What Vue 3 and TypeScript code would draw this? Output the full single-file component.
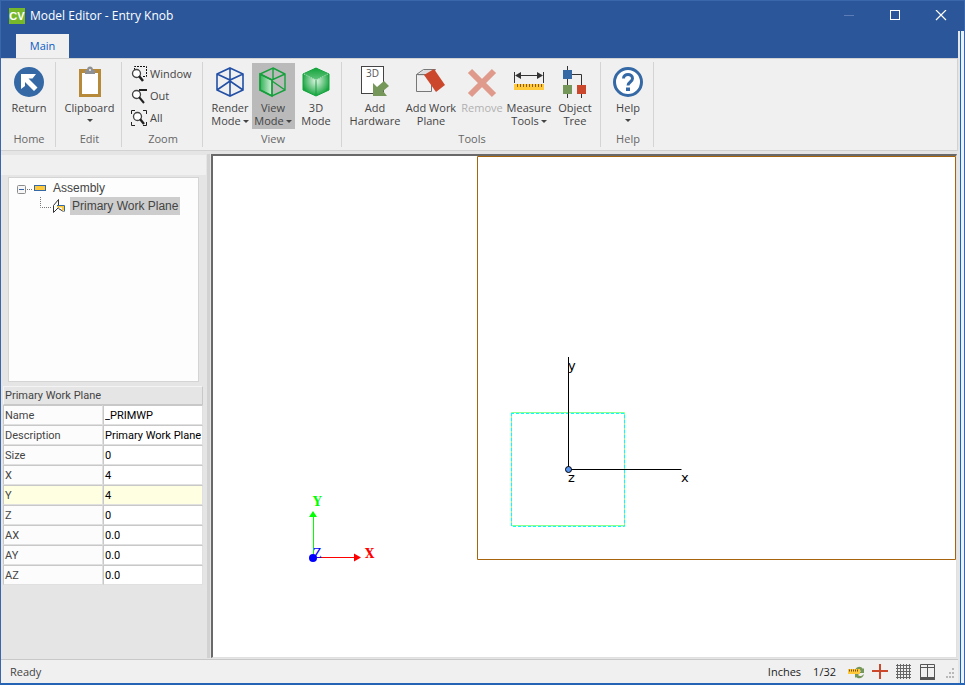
<script setup lang="ts">
import { reactive, ref } from 'vue'

interface Field {
  label: string
  value: string
}

const fields = reactive<Field[]>([
  { label: 'Name', value: '_PRIMWP' },
  { label: 'Description', value: 'Primary Work Plane' },
  { label: 'Size', value: '0' },
  { label: 'X', value: '4' },
  { label: 'Y', value: '4' },
  { label: 'Z', value: '0' },
  { label: 'AX', value: '0.0' },
  { label: 'AY', value: '0.0' },
  { label: 'AZ', value: '0.0' },
])
const activeField = ref('Y')
</script>

<template>
  <div class="window">
    <header class="titlebar">
      <span class="logo">CV</span>
      <h1 class="title">Model Editor - Entry Knob</h1>
      <div class="caption-buttons">
        <button class="caption-button" aria-label="Minimize" disabled>
          <svg width="12" height="12"><path d="M1 5.500h10" stroke="#5c7db5" fill="none" /></svg>
        </button>
        <button class="caption-button" aria-label="Maximize">
          <svg width="12" height="12"><rect x="1.500" y="0.500" width="9" height="9" stroke="#fff" fill="none" /></svg>
        </button>
        <button class="caption-button" aria-label="Close">
          <svg width="12" height="12"><path d="M1 0l10 10M11 0L1 10" stroke="#fff" stroke-width="1.200" fill="none" /></svg>
        </button>
      </div>
    </header>

    <div class="frame">
      <div class="client">
        <nav class="tabs"><button class="tab">Main</button></nav>

        <div class="ribbon">
          <section class="group home">
            <div class="tools">
              <button class="tool">
                <svg class="icon" viewBox="0 0 32 32">
                  <circle cx="16" cy="16" r="15" fill="#3469a6" />
                  <path d="M8 8h15l-3.500 4.500h-4l9 9-3.500 3.500-9-9v4L8 23z" fill="#fff" />
                </svg>
                <span>Return</span>
              </button>
            </div>
            <h2>Home</h2>
          </section>

          <section class="group edit">
            <div class="tools">
              <button class="tool">
                <svg class="icon" viewBox="0 0 32 32">
                  <rect x="5" y="3" width="22" height="28" fill="#b78a3a" />
                  <rect x="8" y="7" width="16" height="21" fill="#fff" />
                  <path d="M11 8V4h2a3 3.500 0 0 1 6 0h2v4z" fill="#8d9195" />
                  <circle cx="16" cy="4" r="1" fill="#f0f0f0" />
                </svg>
                <span>Clipboard</span>
                <i class="arrow below"></i>
              </button>
            </div>
            <h2>Edit</h2>
          </section>

          <section class="group zoom">
            <div class="zoom-tools">
              <button class="row-tool">
                <svg width="18" height="18" viewBox="0 0 18 18" fill="none">
                  <path d="M3.500 5V1.500h12v10H12" stroke="#111" stroke-dasharray="2 1" />
                  <circle cx="5.500" cy="8.500" r="4" fill="#fff" stroke="#444" stroke-width="1.300" />
                  <path d="M8 11l4 5" stroke="#222" stroke-width="2.500" />
                </svg>Window
              </button>
              <button class="row-tool">
                <svg width="18" height="18" viewBox="0 0 18 18" fill="none">
                  <circle cx="5.500" cy="7.500" r="4" fill="#fff" stroke="#444" stroke-width="1.300" />
                  <path d="M8 10l5 6M8 3h8" stroke="#222" stroke-width="2" />
                </svg>Out
              </button>
              <button class="row-tool">
                <svg width="18" height="18" viewBox="0 0 18 18" fill="none">
                  <path d="M0.500 5V1.500H4M12 1.500h3.500V5M0.500 13v3.500H4M12 16.500h3.500V13" stroke="#222" />
                  <circle cx="6.500" cy="7.500" r="4" fill="#fff" stroke="#444" stroke-width="1.300" />
                  <path d="M9 10l4 5" stroke="#222" stroke-width="2.300" />
                </svg>All
              </button>
            </div>
            <h2>Zoom</h2>
          </section>

          <section class="group view">
            <div class="tools">
              <button class="tool">
                <svg class="icon" viewBox="0 0 32 32" fill="none" stroke="#2350a5" stroke-width="1.600">
                  <path d="M16 2l13 6v16l-13 6-13-6V8zM3 8l13 6 13-6M16 2v28M3 24l13-9 13 9" />
                </svg>
                <span>Render<br />Mode<i class="arrow"></i></span>
              </button>
              <button class="tool pressed">
                <svg class="icon" viewBox="0 0 32 32" fill="none" stroke="#16a03c" stroke-width="1.400">
                  <defs>
                    <linearGradient id="face" x1="0" y1="0" x2="1" y2="0">
                      <stop offset="0" stop-color="#2fb257" /><stop offset="1" stop-color="#d8f0dc" />
                    </linearGradient>
                  </defs>
                  <path d="M3 8l12 6v16L3 24z" fill="url(#face)" />
                  <path d="M16 2l12 6v16l-13 6-12-6V8zM3 8l12 6 13-6M16 2v12M15 14v16M15 15l13 9" />
                </svg>
                <span>View<br />Mode<i class="arrow"></i></span>
              </button>
              <button class="tool">
                <svg class="icon" viewBox="0 0 32 32">
                  <defs>
                    <radialGradient id="solid" cx="0.500" cy="0.450" r="0.550">
                      <stop offset="0" stop-color="#e4f6e8" /><stop offset="1" stop-color="#12a33b" />
                    </radialGradient>
                    <linearGradient id="lid" x1="0" y1="0" x2="0" y2="1">
                      <stop offset="0" stop-color="#12a33b" /><stop offset="1" stop-color="#63c47c" />
                    </linearGradient>
                  </defs>
                  <path d="M16 2l13 6v16l-13 6-13-6V8z" fill="url(#solid)" stroke="#12a33b" />
                  <path d="M16 2l13 6-13 6L3 8z" fill="url(#lid)" />
                  <path d="M16 14v15" stroke="#12a33b" />
                  <path d="M4 8l12 6 12-6" fill="none" stroke="#b6e4c0" stroke-dasharray="1 1" />
                </svg>
                <span>3D<br />Mode</span>
              </button>
            </div>
            <h2>View</h2>
          </section>

          <section class="group tools-group">
            <div class="tools">
              <button class="tool wide">
                <svg class="icon" viewBox="0 0 32 32">
                  <rect x="2.500" y="0.500" width="22" height="27" fill="#fff" stroke="#444" />
                  <text x="7" y="11" class="doc-label">3D</text>
                  <path d="M14 17l4 4 7-6 5 5-6 5 4 5H14z" fill="#76975a" />
                </svg>
                <span>Add<br />Hardware</span>
              </button>
              <button class="tool medium">
                <svg class="icon" viewBox="0 0 32 32">
                  <path d="M2 10l7-6h10l-4 6z" fill="#ddd" />
                  <path d="M1.500 8.500h15v17h-15zM1.500 8.500l7-5h12l-4 5" fill="none" stroke="#777" />
                  <path d="M9 9l10-6 11 16-9 7z" fill="#cc482c" />
                </svg>
                <span>Add Work<br />Plane</span>
              </button>
              <button class="tool remove" disabled>
                <svg class="icon" viewBox="0 0 32 32">
                  <path d="M4 5l24 24M28 5L4 29" stroke="#e09a8c" stroke-width="6" />
                </svg>
                <span>Remove</span>
              </button>
              <button class="tool">
                <svg class="icon" viewBox="0 0 32 32">
                  <path d="M1.500 6v11M30.500 6v11M4 9.500h24" stroke="#333" />
                  <path d="M2 9.500l6-3.500v7zM30 9.500L24 6v7z" fill="#333" />
                  <rect x="1" y="18" width="30" height="6" fill="#ffcb3d" />
                  <path d="M4 19.500h25" stroke="#8b5a16" stroke-width="3" stroke-dasharray="1 2" />
                </svg>
                <span>Measure<br />Tools<i class="arrow"></i></span>
              </button>
              <button class="tool">
                <svg class="icon" viewBox="0 0 32 32">
                  <path d="M8.500 0v32M8.500 8.500h14V32" fill="none" stroke="#333" />
                  <rect x="4" y="4" width="9" height="9" fill="#3469a6" />
                  <rect x="4" y="19" width="9" height="9" fill="#76975a" />
                  <rect x="18" y="19" width="9" height="9" fill="#cc482c" />
                </svg>
                <span>Object<br />Tree</span>
              </button>
            </div>
            <h2>Tools</h2>
          </section>

          <section class="group help">
            <div class="tools">
              <button class="tool">
                <svg class="icon" viewBox="0 0 32 32">
                  <circle cx="16" cy="16" r="13.500" fill="#fff" stroke="#3469a6" stroke-width="3" />
                  <path d="M11.500 12.500c0-5.500 9-5.500 9 0 0 3.500-4.500 3.500-4.500 7" fill="none" stroke="#3469a6" stroke-width="3" />
                  <rect x="14" y="21.500" width="4" height="3.500" fill="#3469a6" />
                </svg>
                <span>Help</span>
                <i class="arrow below"></i>
              </button>
            </div>
            <h2>Help</h2>
          </section>
        </div>

        <main class="workspace">
          <aside class="sidebar">
            <div class="strip"></div>
            <ul class="tree">
              <li class="node">
                <svg width="34" height="14" viewBox="0 0 34 14">
                  <rect x="0.500" y="4.500" width="8" height="8" rx="1" fill="#f6f6f6" stroke="#8c8c8c" />
                  <path d="M2 8.500h5" stroke="#3a62a8" />
                  <path d="M10 8.500h6" stroke="#777" stroke-dasharray="1 1" />
                  <rect x="17.500" y="4.500" width="11" height="5" fill="#ffc93a" stroke="#3469a6" />
                </svg>
                <span>Assembly</span>
              </li>
              <li class="node child">
                <svg width="30" height="18" viewBox="0 0 30 18">
                  <path d="M0.500 0v10.500H12" fill="none" stroke="#777" stroke-dasharray="1 1" />
                  <path d="M13.500 15.500v-7l5-6v8zM18.500 11.500l5 3" fill="none" stroke="#333" />
                  <path d="M17 9.500h6v4" fill="none" stroke="#ffc93a" stroke-width="2" />
                  <path d="M17 8.500h7.500v6" fill="none" stroke="#3469a6" />
                </svg>
                <span class="selected">Primary Work Plane</span>
              </li>
            </ul>
            <table class="properties">
              <thead>
                <tr><th colspan="2" scope="colgroup">Primary Work Plane</th></tr>
              </thead>
              <tbody>
                <tr v-for="field in fields" :key="field.label" :class="{ active: field.label === activeField }">
                  <th scope="row"><label :for="'field-' + field.label">{{ field.label }}</label></th>
                  <td><input :id="'field-' + field.label" v-model="field.value" type="text" @focus="activeField = field.label" /></td>
                </tr>
              </tbody>
            </table>
          </aside>
          <div class="splitter"></div>
          <div class="canvas">
            <svg width="100%" height="100%">
              <g fill="none">
                <path d="M264.500 0.500h478v403h-478z" stroke="#a8640c" />
                <path d="M298.500 370V256.500h113V370" stroke="#8cff8c" />
                <path d="M298.500 369.500h113V257" stroke="#8cff8c" />
                <path d="M298.500 257v113.500h113V257.500h-113" stroke="#00ffff" stroke-dasharray="3 2" />
                <path d="M355.500 201v112.500h113" stroke="#000" />
              </g>
              <circle cx="355.500" cy="313.500" r="3" fill="#5a96f0" stroke="#000" />
              <g class="axis">
                <text x="355" y="214">y</text>
                <text x="468" y="326">x</text>
                <text x="355" y="326">z</text>
              </g>
              <path d="M100.500 401v-40" stroke="#0f0" />
              <path d="M96 361h8l-4-6z" fill="#0f0" />
              <path d="M100 401.500h42" stroke="#f00" />
              <path d="M141 397.500v8l7-4z" fill="#f00" />
              <circle cx="100" cy="402" r="4" fill="#00f" />
              <g class="world">
                <text x="100" y="350" fill="#0f0">Y</text>
                <text x="152" y="402" fill="#f00">X</text>
                <text x="100" y="402" fill="#00f" class="thin">Z</text>
              </g>
            </svg>
          </div>
        </main>

        <footer class="statusbar">
          <span class="ready">Ready</span>
          <span>Inches</span>
          <span>1/32</span>
          <div class="status-icons">
            <svg width="16" height="16" viewBox="0 0 16 16">
              <path d="M7 6c2-4 6-4 8-1l1-1v5h-5l2-2c-2-2-4-1-6-1zM7 10h4l-1 1c2 2 4 1 6-1-1 5-6 5-8 3l-1 1z" fill="#76975a" />
              <rect y="5" width="12" height="5" fill="#ffc93a" />
              <path d="M1 6.500h10" stroke="#775018" stroke-dasharray="1 1" stroke-width="2" />
            </svg>
            <svg width="16" height="16" viewBox="0 0 16 16"><path d="M0 7h16M8 0v15" stroke="#cc482c" stroke-width="2" /></svg>
            <svg width="16" height="16" viewBox="0 0 16 16">
              <path d="M0 1.500h15M0 4.500h15M0 7.500h15M0 10.500h15M0 13.500h15M1.500 0v15M4.500 0v15M7.500 0v15M10.500 0v15M13.500 0v15" stroke="#666" />
            </svg>
            <svg width="16" height="16" viewBox="0 0 16 16">
              <path d="M0.500 0.500h14v13H0.500zM0 3.500h15M7.500 0v13" fill="none" stroke="#555" />
              <path d="M0 14.500h15" stroke="#555" stroke-width="3" />
            </svg>
            <svg width="10" height="16" viewBox="0 0 10 16">
              <path d="M8 5h2M5 9h2M8 9h2M2 13h2M5 13h2M8 13h2" stroke="#b8b8b8" stroke-width="2" />
            </svg>
          </div>
        </footer>
      </div>
      <div class="edge"></div>
    </div>
  </div>
</template>

<style>
body {
  margin: 0;
}
</style>

<style scoped>
* {
  box-sizing: border-box;
}
.window {
  display: flex;
  flex-direction: column;
  height: 100vh;
  min-height: 640px;
  border: 1px solid #3a66ab;
  border-bottom: 2px solid #2563b5;
  background: #2b579a;
  font-family: "Open Sans", "Noto Sans", sans-serif;
  font-size: 11px;
  line-height: 13px;
  color: #444;
}
button {
  margin: 0;
  padding: 0;
  border: 0;
  background: none;
  font: inherit;
  color: inherit;
}
svg {
  display: block;
  flex: none;
}
.titlebar {
  display: flex;
  align-items: center;
  height: 30px;
  padding-left: 8px;
}
.logo {
  width: 16px;
  height: 16px;
  background: #76b82a;
  color: #fff;
  font: bold 11px/16px "Liberation Sans", sans-serif;
  text-align: center;
}
.title {
  flex: 1;
  margin: 0 0 0 5px;
  font-size: 12px;
  font-weight: 400;
  line-height: 16px;
  color: #fff;
}
.caption-buttons {
  display: flex;
}
.caption-button {
  display: grid;
  place-items: center;
  width: 46px;
  height: 30px;
}
.frame {
  display: flex;
  flex: 1;
  min-height: 0;
}
.client {
  display: flex;
  flex: 1;
  flex-direction: column;
  min-width: 0;
  background: #e5e5e5;
}
.edge {
  width: 6px;
  border-left: 2px solid #e5e5e5;
  background: linear-gradient(to right, #0a64cc 1px, #f0f0f0 1px);
}
.tabs {
  display: flex;
  align-items: flex-end;
  height: 27px;
  padding-left: 15px;
  background: #2b579a;
}
.tab {
  width: 53px;
  height: 24px;
  padding-bottom: 2px;
  background: #f0f0f0;
  color: #0a5bc4;
}
.ribbon {
  display: flex;
  height: 93px;
  padding: 3px 0;
  border: 1px solid #d2d2d2;
  border-left: 0;
  background: #f0f0f0;
}
.group {
  display: flex;
  flex-direction: column;
  justify-content: space-between;
  padding-left: 2px;
  border-right: 1px solid #d4d4d4;
}
.group h2 {
  margin: 0 0 1px;
  font-size: 11px;
  font-weight: 400;
  line-height: 14px;
  text-align: center;
  color: #666;
}
.home {
  width: 55px;
}
.edit {
  width: 66px;
}
.zoom {
  width: 81px;
}
.view {
  width: 139px;
}
.tools-group {
  width: 259px;
}
.help {
  width: 53px;
}
.tools {
  display: flex;
  justify-content: center;
  padding-top: 1px;
}
.tool {
  display: flex;
  flex-direction: column;
  align-items: center;
  width: 46px;
  height: 66px;
  padding-top: 3px;
  text-align: center;
  white-space: nowrap;
}
.tool:disabled {
  color: #b0b0b0;
}
.view .tool {
  width: 43px;
}
.tool.wide {
  width: 58px;
}
.tool.medium {
  width: 54px;
}
.tool.remove {
  width: 48px;
}
.pressed {
  background: #bababa;
}
.icon {
  width: 32px;
  height: 32px;
  margin-bottom: 3px;
}
.doc-label {
  font: 10px "Open Sans", sans-serif;
  fill: #555;
}
.arrow {
  display: inline-block;
  margin-left: 2px;
  border: 3px solid transparent;
  border-top-color: #444;
  border-bottom: 0;
  vertical-align: 2px;
}
.arrow.below {
  margin: 5px 0 0;
}
.zoom-tools {
  display: flex;
  flex-direction: column;
  gap: 4px;
  padding: 3px 0 0 7px;
}
.row-tool {
  display: flex;
  align-items: center;
  gap: 1px;
  height: 18px;
  line-height: 16px;
}
.workspace {
  display: flex;
  flex: 1;
  min-height: 0;
  padding: 3px 0 1px;
}
.sidebar {
  width: 205px;
  padding-top: 1px;
}
.strip {
  height: 20px;
  background: #f0f0f0;
}
.tree {
  height: 205px;
  margin: 2px 7px 4px;
  padding: 1px 8px;
  border: 1px solid #d4d4d4;
  background: #fdfdfd;
  list-style: none;
  font-family: "Liberation Sans", sans-serif;
  font-size: 12px;
  line-height: 18px;
}
.node {
  display: flex;
  align-items: center;
  height: 18px;
}
.node > span {
  padding: 0 2px;
}
.child {
  padding-left: 23px;
}
.selected {
  background: #cdcdcd;
}
.properties {
  width: 200px;
  margin-left: 2px;
  border-collapse: separate;
  border-spacing: 0;
  table-layout: fixed;
  font-family: Roboto, "Liberation Sans", sans-serif;
  font-size: 11px;
  line-height: 17px;
}
.properties th,
.properties td {
  height: 20px;
  padding: 0 0 0 1px;
  border: 1px solid #e0e0e0;
  border-top-color: #c8c8c8;
  border-left-color: #c8c8c8;
  background: #fcfcfc;
  font-weight: 400;
  text-align: left;
}
.properties thead th {
  height: 18px;
  border-color: #f4f4f4 #c8c8c8 #c8c8c8 #f4f4f4;
  background: #e5e5e5;
}
.properties td {
  background: #fff;
}
.properties label,
.properties input {
  display: block;
}
.properties .active th,
.properties .active td {
  background: #ffffe1;
}
.properties input {
  width: 100%;
  height: 17px;
  padding: 0;
  border: 0;
  outline: 0;
  background: transparent;
  font: inherit;
  color: #000;
}
.splitter {
  width: 3px;
  margin: 0 1px;
  background: #d2d2d2;
}
.canvas {
  flex: 1;
  min-width: 0;
  margin-right: 1px;
  overflow: hidden;
  border-top: 2px solid #696969;
  border-left: 2px solid #696969;
  border-bottom: 1px solid #e0e0e0;
  border-right: 1px solid #e0e0e0;
  background: #fff;
}
.axis {
  font: 13px "DejaVu Sans", sans-serif;
}
.world {
  font: bold 12px "DejaVu Serif", serif;
}
.thin {
  font-weight: 400;
}
.statusbar {
  display: flex;
  align-items: center;
  gap: 12px;
  height: 24px;
  padding: 0 4px 0 9px;
  border-top: 1px solid #c8c8c8;
  background: #f0f0f0;
  color: #222;
}
.ready {
  flex: 1;
  color: #444;
}
.status-icons {
  display: flex;
  gap: 8px;
}
</style>
